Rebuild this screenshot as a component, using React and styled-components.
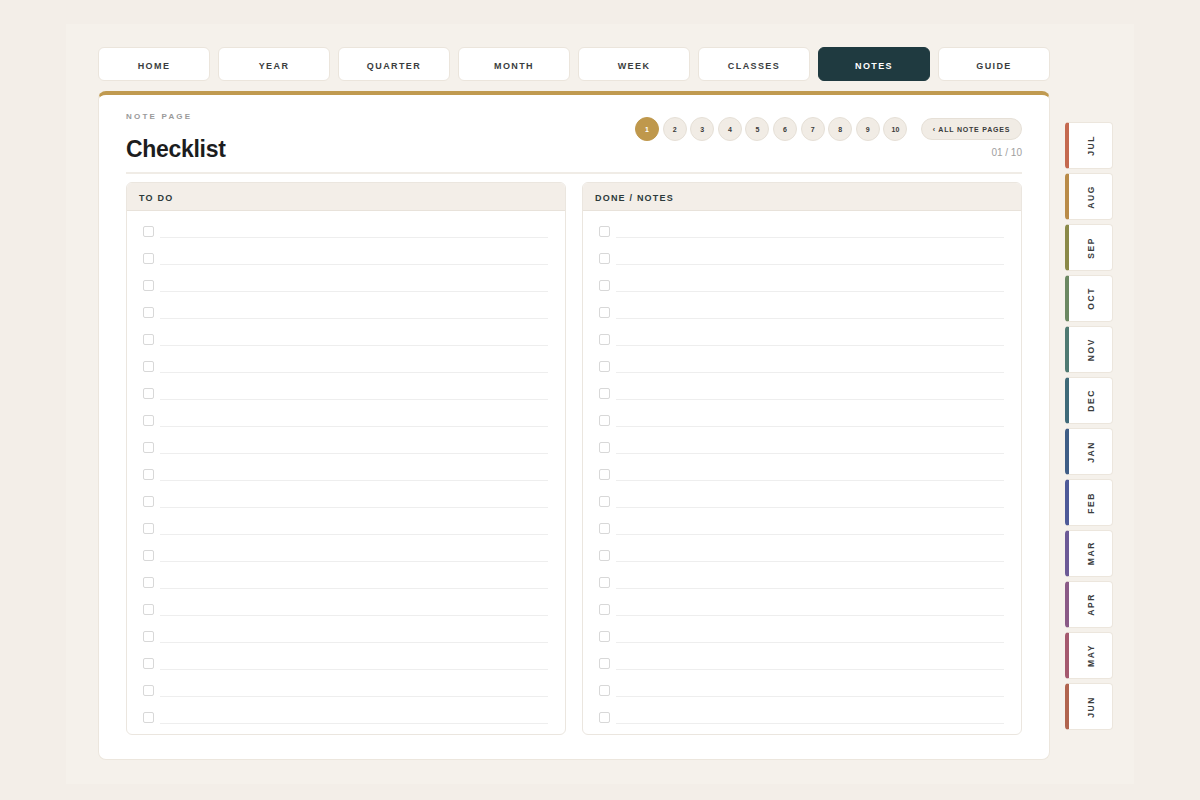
import React from 'react'
import styled, { createGlobalStyle } from 'styled-components'

const GlobalStyle = createGlobalStyle`
    html, body {
        margin: 0;
        padding: 0;
        background: #f3eee8;
        font-family: "Liberation Sans", Arial, sans-serif;
    }
    * { box-sizing: border-box; }
`

const StPage = styled.div`
    width: 1200px;
    height: 800px;
    padding: 24px 66px 16px;
`

const StFrame = styled.div`
    height: 760px;
    background: #f5f1eb;
    padding: 23px 20px 0 32px;
    display: flex;
    gap: 15px;
`

const StMain = styled.div`
    width: 952px;
    display: flex;
    flex-direction: column;
    gap: 10px;
`

const StNav = styled.div`
    display: flex;
    gap: 8px;
`

const SNavButton = styled.button`
    width: 112px;
    height: 34px;
    border-radius: 6px;
    border: 1px solid ${(p) => (p.active ? '#1f3a40' : '#ebe5dc')};
    background: ${(p) => (p.active ? '#1f3a40' : '#ffffff')};
    color: ${(p) => (p.active ? '#ffffff' : '#3a3d3e')};
    font-family: inherit;
    font-size: 9px;
    font-weight: 700;
    letter-spacing: 1.4px;
    padding: 4px 0 0;
`

const StCard = styled.div`
    height: 669px;
    background: #ffffff;
    border: 1px solid #ece6dd;
    border-top: 4px solid #c09a50;
    border-radius: 8px;
    padding: 17px 27px 25px;
    display: flex;
    flex-direction: column;
`

const StHead = styled.div`
    display: flex;
    justify-content: space-between;
    align-items: flex-start;
    padding-bottom: 9px;
    border-bottom: 2px solid #f0ece6;
`

const StEyebrow = styled.div`
    font-size: 8px;
    font-weight: 700;
    letter-spacing: 2.2px;
    color: #9a9a9a;
`

const StTitle = styled.h1`
    margin: 15px 0 0;
    font-size: 23px;
    font-weight: 700;
    color: #1c1d1e;
    letter-spacing: -0.3px;
`

const StPagerWrap = styled.div`
    display: flex;
    flex-direction: column;
    align-items: flex-end;
    padding-top: 5px;
`

const StPager = styled.div`
    display: flex;
    align-items: center;
    gap: 3.6px;
`

const SPageDot = styled.div`
    width: 24px;
    height: 24px;
    border-radius: 50%;
    display: flex;
    align-items: center;
    justify-content: center;
    font-size: 7px;
    font-weight: 700;
    background: ${(p) => (p.active ? '#bf984c' : '#f1ece5')};
    color: ${(p) => (p.active ? '#ffffff' : '#3a3a3a')};
    border: 1px solid ${(p) => (p.active ? '#bf984c' : '#e6e0d7')};
`

const SAllPages = styled.div`
    margin-left: 10px;
    width: 101px;
    height: 22px;
    border-radius: 11px;
    background: #f1ece5;
    border: 1px solid #e6e0d7;
    font-size: 7px;
    font-weight: 700;
    letter-spacing: 0.8px;
    color: #3a3a3a;
    display: flex;
    align-items: center;
    justify-content: center;
`

const StCount = styled.div`
    margin-top: 6px;
    font-size: 10px;
    color: #a0a0a0;
`

const StColumns = styled.div`
    margin-top: 8px;
    flex: 1;
    display: grid;
    grid-template-columns: 1fr 1fr;
    align-items: start;
    gap: 16px;
`

const StColumn = styled.div`
    border: 1px solid #ebe6df;
    border-radius: 6px;
    overflow: hidden;
    display: flex;
    flex-direction: column;
`

const StColHead = styled.div`
    height: 28px;
    background: #f3eee8;
    border-bottom: 1px solid #e8e2da;
    padding: 2px 12px 0;
    display: flex;
    align-items: center;
    font-size: 9px;
    font-weight: 700;
    letter-spacing: 1.2px;
    color: #2c3a3b;
`

const StList = styled.div`
    padding: 0 17px 10px 16px;
`

const StRow = styled.div`
    height: 27px;
    display: flex;
    align-items: flex-end;
    gap: 6px;
`

const SBox = styled.div`
    width: 11px;
    height: 11px;
    margin-bottom: 1px;
    border: 1px solid #d8d8d8;
    border-radius: 2px;
    flex-shrink: 0;
`

const SLine = styled.div`
    flex: 1;
    border-bottom: 1px solid #eeeeee;
`

const StTabs = styled.div`
    padding-top: 75px;
    display: flex;
    flex-direction: column;
    gap: 4px;
`

const STab = styled.div`
    width: 48px;
    height: 47px;
    background: #ffffff;
    border: 1px solid #ece6dd;
    border-left: 4px solid ${(p) => p.color};
    border-radius: 4px;
    display: flex;
    align-items: center;
    justify-content: center;
    span {
        writing-mode: vertical-rl;
        transform: rotate(180deg);
        font-size: 8.5px;
        font-weight: 700;
        letter-spacing: 1.6px;
        color: #3a3d3e;
    }
`

const navItems = ['HOME', 'YEAR', 'QUARTER', 'MONTH', 'WEEK', 'CLASSES', 'NOTES', 'GUIDE']
const months = [
    ['JUL', '#c46a50'],
    ['AUG', '#b98b48'],
    ['SEP', '#8a8948'],
    ['OCT', '#6b8862'],
    ['NOV', '#4f7a72'],
    ['DEC', '#3f6a78'],
    ['JAN', '#3f5e86'],
    ['FEB', '#4e5a98'],
    ['MAR', '#6c5a96'],
    ['APR', '#8a5a86'],
    ['MAY', '#a4596e'],
    ['JUN', '#b0644e'],
]
const rows = Array.from({ length: 19 }, (_, i) => i)

const Column = ({ title }) => (
    <StColumn>
        <StColHead>{title}</StColHead>
        <StList>
            {rows.map((r) => (
                <StRow key={r}>
                    <SBox />
                    <SLine />
                </StRow>
            ))}
        </StList>
    </StColumn>
)

const App = () => {
    return (
        <StPage>
            <GlobalStyle />
            <StFrame>
                <StMain>
                    <StNav>
                        {navItems.map((n) => (
                            <SNavButton key={n} active={n === 'NOTES'}>{n}</SNavButton>
                        ))}
                    </StNav>
                    <StCard>
                        <StHead>
                            <div>
                                <StEyebrow>NOTE PAGE</StEyebrow>
                                <StTitle>Checklist</StTitle>
                            </div>
                            <StPagerWrap>
                                <StPager>
                                    {Array.from({ length: 10 }, (_, i) => (
                                        <SPageDot key={i} active={i === 0}>{i + 1}</SPageDot>
                                    ))}
                                    <SAllPages>‹ ALL NOTE PAGES</SAllPages>
                                </StPager>
                                <StCount>01 / 10</StCount>
                            </StPagerWrap>
                        </StHead>
                        <StColumns>
                            <Column title="TO DO" />
                            <Column title="DONE / NOTES" />
                        </StColumns>
                    </StCard>
                </StMain>
                <StTabs>
                    {months.map(([m, c]) => (
                        <STab key={m} color={c}><span>{m}</span></STab>
                    ))}
                </StTabs>
            </StFrame>
        </StPage>
    )
}
export default App
